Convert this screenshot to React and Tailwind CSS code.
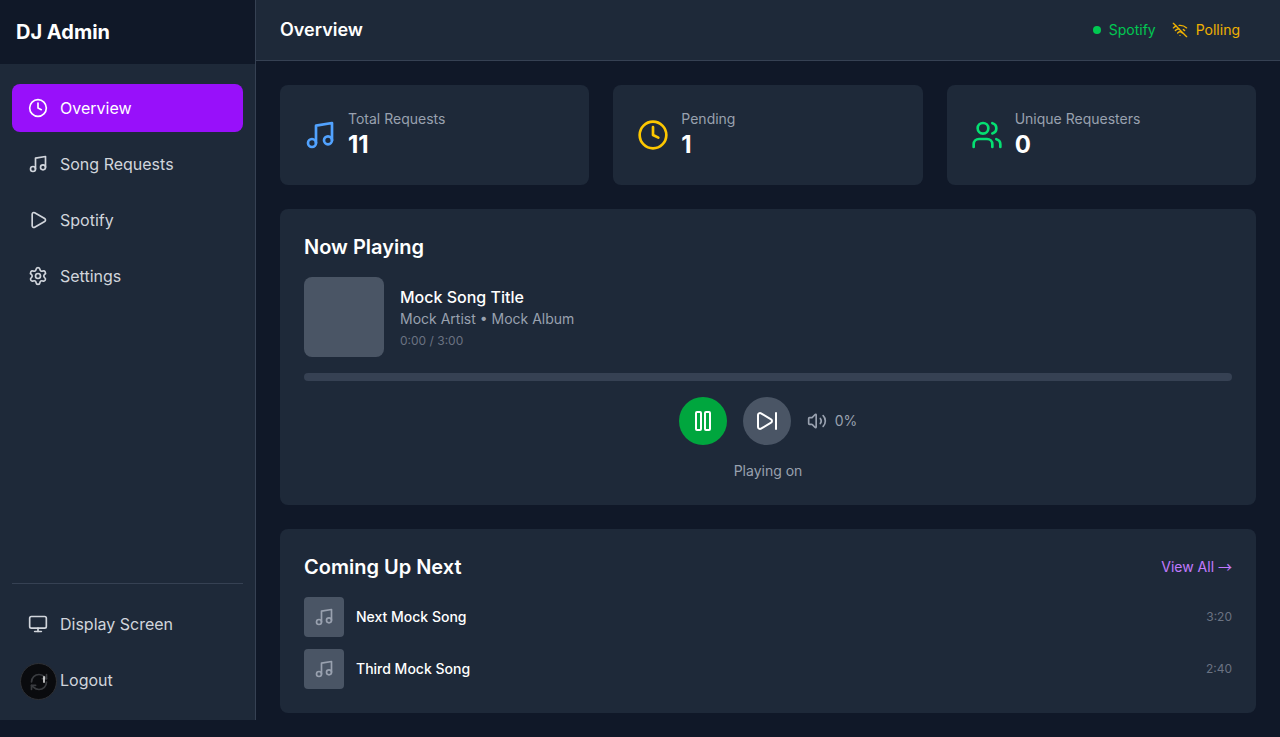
import React from "react";
import { Clock, Music, Play, Settings, Monitor, LogOut, WifiOff, Pause, SkipForward, Volume2, Users, RefreshCw } from "lucide-react";

const navItems = [
  { label: "Overview", icon: Clock, active: true },
  { label: "Song Requests", icon: Music },
  { label: "Spotify", icon: Play },
  { label: "Settings", icon: Settings },
];

const stats = [
  { label: "Total Requests", value: "11", icon: Music, color: "text-blue-400" },
  { label: "Pending", value: "1", icon: Clock, color: "text-yellow-400" },
  { label: "Unique Requesters", value: "0", icon: Users, color: "text-green-400" },
];

const queue = [
  { title: "Next Mock Song", time: "3:20" },
  { title: "Third Mock Song", time: "2:40" },
];

function NavItem({ label, icon: Icon, active }) {
  return (
    <a
      className={
        active
          ? "flex items-center gap-3 px-4 py-3 rounded-lg bg-purple-600 text-white"
          : "flex items-center gap-3 px-4 py-3 rounded-lg text-gray-300"
      }
    >
      <Icon className="w-5 h-5" />
      <span>{label}</span>
    </a>
  );
}

export default function App() {
  return (
    <div className="relative flex min-h-[737px] bg-gray-900 font-['Inter',sans-serif]">
      <aside className="flex flex-col w-64 h-[720px] shrink-0 bg-gray-800 border-r border-gray-700">
        <div className="flex items-center h-16 px-4 bg-gray-900">
          <h1 className="text-xl font-bold text-white">DJ Admin</h1>
        </div>
        <nav className="flex-1 flex flex-col gap-2 px-3 pt-5">
          {navItems.map((item) => (
            <NavItem key={item.label} {...item} />
          ))}
        </nav>
        <div className="mx-3 pt-4 pb-4 flex flex-col gap-2 border-t border-gray-700">
          <NavItem label="Display Screen" icon={Monitor} />
          <NavItem label="Logout" icon={LogOut} />
        </div>
      </aside>

      <main className="flex-1 flex flex-col min-w-0">
        <header className="flex items-center justify-between h-[61px] pl-6 pr-10 bg-gray-800 border-b border-gray-700">
          <h2 className="text-lg font-semibold text-white">Overview</h2>
          <div className="flex items-center gap-4 text-sm">
            <div className="flex items-center gap-2 text-green-500">
              <span className="w-2 h-2 rounded-full bg-green-500" />
              <span>Spotify</span>
            </div>
            <div className="flex items-center gap-2 text-yellow-500">
              <WifiOff className="w-4 h-4" />
              <span>Polling</span>
            </div>
          </div>
        </header>

        <div className="flex flex-col gap-6 p-6">
          <div className="grid grid-cols-3 gap-6">
            {stats.map(({ label, value, icon: Icon, color }) => (
              <div key={label} className="flex items-center gap-3 p-6 bg-gray-800 rounded-lg">
                <Icon className={"w-8 h-8 " + color} />
                <div>
                  <p className="text-sm text-gray-400">{label}</p>
                  <p className="text-2xl font-bold text-white">{value}</p>
                </div>
              </div>
            ))}
          </div>

          <section className="p-6 bg-gray-800 rounded-lg">
            <h3 className="mb-4 text-xl font-semibold text-white">Now Playing</h3>
            <div className="flex items-center gap-4">
              <div className="w-20 h-20 rounded-lg bg-gray-600" />
              <div>
                <p className="font-medium text-white">Mock Song Title</p>
                <p className="text-sm text-gray-400">Mock Artist • Mock Album</p>
                <p className="mt-1 text-xs text-gray-500">0:00 / 3:00</p>
              </div>
            </div>
            <div className="h-2 mt-4 rounded-full bg-gray-700" />
            <div className="flex items-center justify-center gap-4 mt-4">
              <button className="flex items-center justify-center w-12 h-12 rounded-full bg-green-600 text-white">
                <Pause className="w-6 h-6" />
              </button>
              <button className="flex items-center justify-center w-12 h-12 rounded-full bg-gray-600 text-white">
                <SkipForward className="w-6 h-6" />
              </button>
              <div className="flex items-center gap-2 text-sm text-gray-400">
                <Volume2 className="w-5 h-5" />
                <span>0%</span>
              </div>
            </div>
            <p className="mt-4 text-sm text-center text-gray-400">Playing on</p>
          </section>

          <section className="p-6 bg-gray-800 rounded-lg">
            <div className="flex items-center justify-between mb-4">
              <h3 className="text-xl font-semibold text-white">Coming Up Next</h3>
              <a className="text-sm text-purple-400">
                View All <span className="font-['Noto_Sans_CJK_JP',sans-serif] leading-none">→</span>
              </a>
            </div>
            <div className="flex flex-col gap-3">
              {queue.map((song) => (
                <div key={song.title} className="flex items-center gap-3">
                  <div className="flex items-center justify-center w-10 h-10 rounded bg-gray-600">
                    <Music className="w-5 h-5 text-gray-400" />
                  </div>
                  <p className="flex-1 text-sm font-medium text-white">{song.title}</p>
                  <span className="text-xs text-gray-500">{song.time}</span>
                </div>
              ))}
            </div>
          </section>
        </div>
      </main>

      {/* dev indicator sitting over the sidebar */}
      <div className="absolute left-[20px] top-[663px] flex items-center justify-center w-[37px] h-[37px] rounded-full bg-[#0a0b0e] border border-[#2e3035]">
        <RefreshCw className="w-5 h-5 text-[#3a3c40]" />
        <span className="absolute left-[22px] top-[12px] w-[2px] h-[7px] rounded-full bg-white/70" />
      </div>
    </div>
  );
}
